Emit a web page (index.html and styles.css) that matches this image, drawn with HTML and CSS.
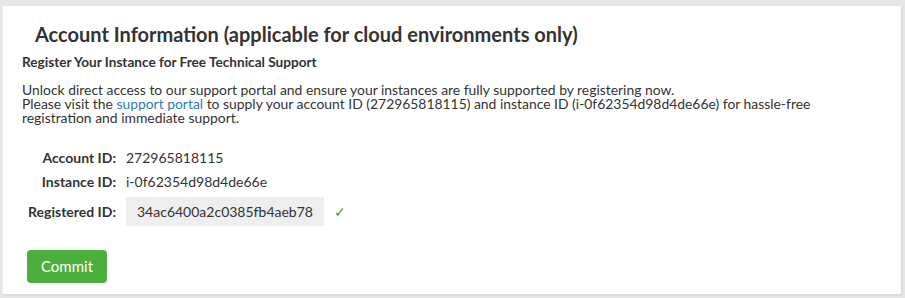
FILE: index.html
```html
<!DOCTYPE html>
<html lang="en">
<head>
    <meta charset="UTF-8">
    <title>Account Information</title>
    <link rel="stylesheet" href="styles.css">
</head>
<body>
    <div class="card">
        <h1>Account Information (applicable for cloud environments only)</h1>
        <h4>Register Your Instance for Free Technical Support</h4>
        <p class="intro">
            Unlock direct access to our support portal and ensure your instances are fully supported by registering now.<br>
            Please visit the <a href="#">support portal</a> to supply your account ID (272965818115) and instance ID (i-0f62354d98d4de66e) for hassle-free registration and immediate support.
        </p>
        <div class="fields">
            <div class="field">
                <span class="label">Account ID:</span>
                <span class="value">272965818115</span>
            </div>
            <div class="field">
                <span class="label">Instance ID:</span>
                <span class="value">i-0f62354d98d4de66e</span>
            </div>
            <div class="field registered">
                <span class="label">Registered ID:</span>
                <span class="value boxed">34ac6400a2c0385fb4aeb78</span>
                <span class="check">&#10003;</span>
            </div>
        </div>
        <button class="commit">Commit</button>
    </div>
</body>
</html>
```

FILE: styles.css
```css
body {
    font-family: Lato, "Open Sans", sans-serif;
    background-color: #e6e6e6;
    margin: 0;
    padding: 6px 4px 4px 2px;
    color: #333;
}

.card {
    background-color: #fff;
    border-left: 1px solid #f0f0f0;
    box-shadow: 1px 1px 2px rgba(0, 0, 0, 0.08);
    height: 288px;
    box-sizing: border-box;
    padding: 14px 20px 0 19px;
}

h1 {
    font-size: 20px;
    font-weight: 700;
    margin: 0 0 6px 13px;
    line-height: 28px;
    color: #333;
}

h4 {
    font-size: 13.6px;
    font-weight: 700;
    margin: 0;
    line-height: 16px;
}

.intro {
    font-size: 13.9px;
    line-height: 14px;
    margin: 13px 0 22px 0;
}

.intro a {
    color: #2a7bc0;
    text-decoration: none;
}

.fields {
    display: flex;
    flex-direction: column;
    gap: 4px;
    font-size: 14px;
}

.field {
    display: flex;
    align-items: center;
    min-height: 20px;
}

.field.registered {
    margin-top: 2px;
}

.label {
    width: 94px;
    text-align: right;
    font-weight: 700;
    margin-right: 10px;
}

.value.boxed {
    background-color: #eee;
    padding: 6px 11px;
    line-height: 17px;
}

.check {
    color: #3a9b3a;
    margin-left: 10px;
}

.commit {
    background-color: #4cae3c;
    color: #fff;
    font-family: inherit;
    font-size: 15px;
    line-height: 17px;
    border: none;
    border-radius: 4px;
    padding: 8px 14px;
    margin-top: 24px;
    margin-left: 5px;
    cursor: pointer;
}
```
